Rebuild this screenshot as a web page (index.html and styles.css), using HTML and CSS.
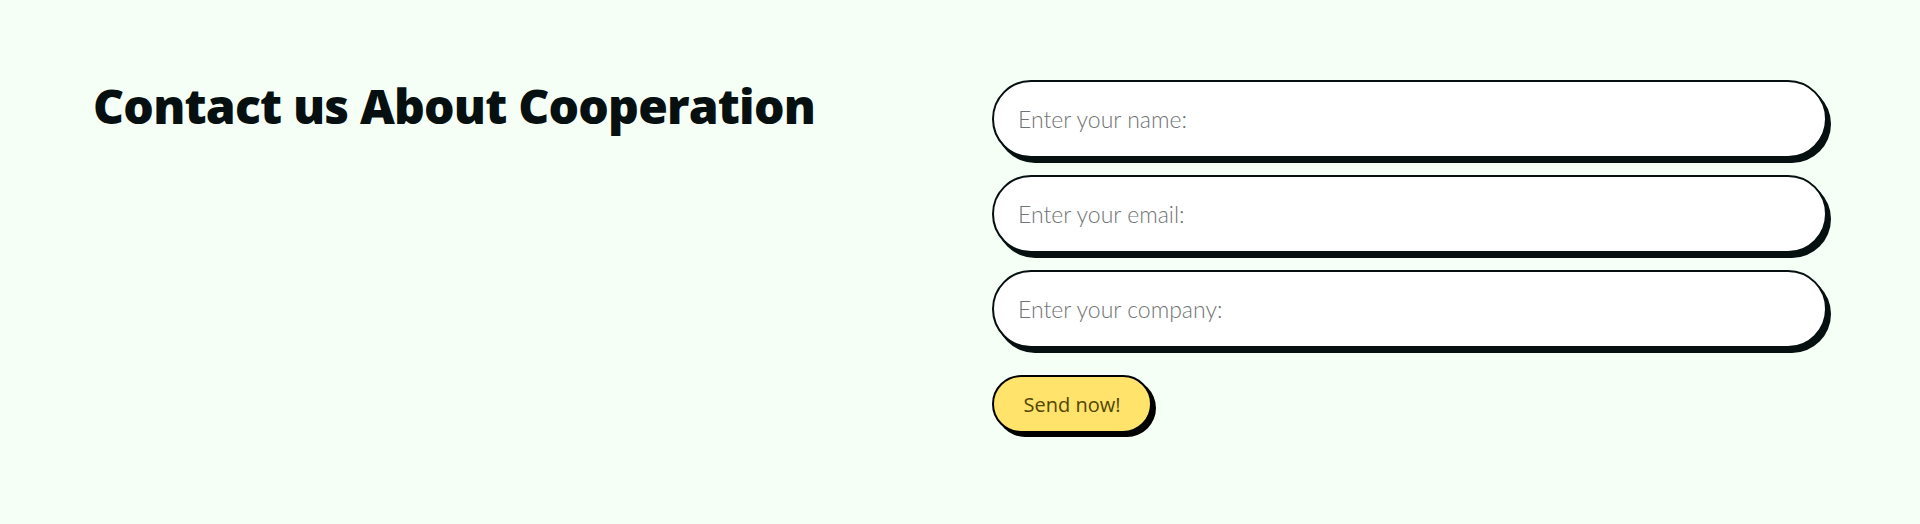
FILE: index.html
```html
<!DOCTYPE html>
<html lang="en">
<head>
<meta charset="utf-8">
<title>Contact us About Cooperation</title>
<link rel="stylesheet" href="styles.css">
</head>
<body>
<section class="contact">
  <div class="contact-intro">
    <h2 class="contact-title">Contact us About Cooperation</h2>
  </div>
  <form class="contact-form">
    <input class="field" type="text" placeholder="Enter your name:">
    <input class="field" type="email" placeholder="Enter your email:">
    <input class="field" type="text" placeholder="Enter your company:">
    <button class="send-btn" type="button">Send now!</button>
  </form>
</section>
</body>
</html>
```

FILE: styles.css
```css
html, body {
  margin: 0;
  padding: 0;
}
body {
  background: #f6fff6;
  height: 524px;
  overflow: hidden;
  font-family: "Lato", "Noto Sans", sans-serif;
}
.contact {
  display: grid;
  grid-template-columns: 1fr 1fr;
  column-gap: 64px;
  padding: 80px 90px 0 90px;
}
.contact-title {
  margin: -3px 0 0 0;
  font-family: "Open Sans", sans-serif;
  font-weight: 800;
  font-size: 48px;
  line-height: 1.2;
  letter-spacing: -0.8px;
  font-variant-ligatures: none;
  color: #061010;
  padding-left: 3px;
}
.contact-form {
  display: flex;
  flex-direction: column;
  align-items: flex-start;
  padding-right: 3px;
}
.field {
  box-sizing: border-box;
  width: 100%;
  height: 78px;
  margin: 0 0 17px 0;
  padding: 0 24px;
  border: 2px solid #061010;
  border-radius: 40px;
  background: #ffffff;
  box-shadow: 4px 5px 0 #061010;
  font-family: "Lato", sans-serif;
  font-weight: 300;
  font-size: 23px;
  color: #333;
  outline: none;
}
.field::placeholder {
  color: #6f7474;
}
.send-btn {
  box-sizing: border-box;
  margin-top: 10px;
  width: 160px;
  height: 58px;
  border: 2px solid #000;
  border-radius: 30px;
  background: #ffe36b;
  box-shadow: 4px 4px 0 #000;
  font-family: "Open Sans", sans-serif;
  font-size: 20px;
  color: #524500;
  cursor: pointer;
}
```
